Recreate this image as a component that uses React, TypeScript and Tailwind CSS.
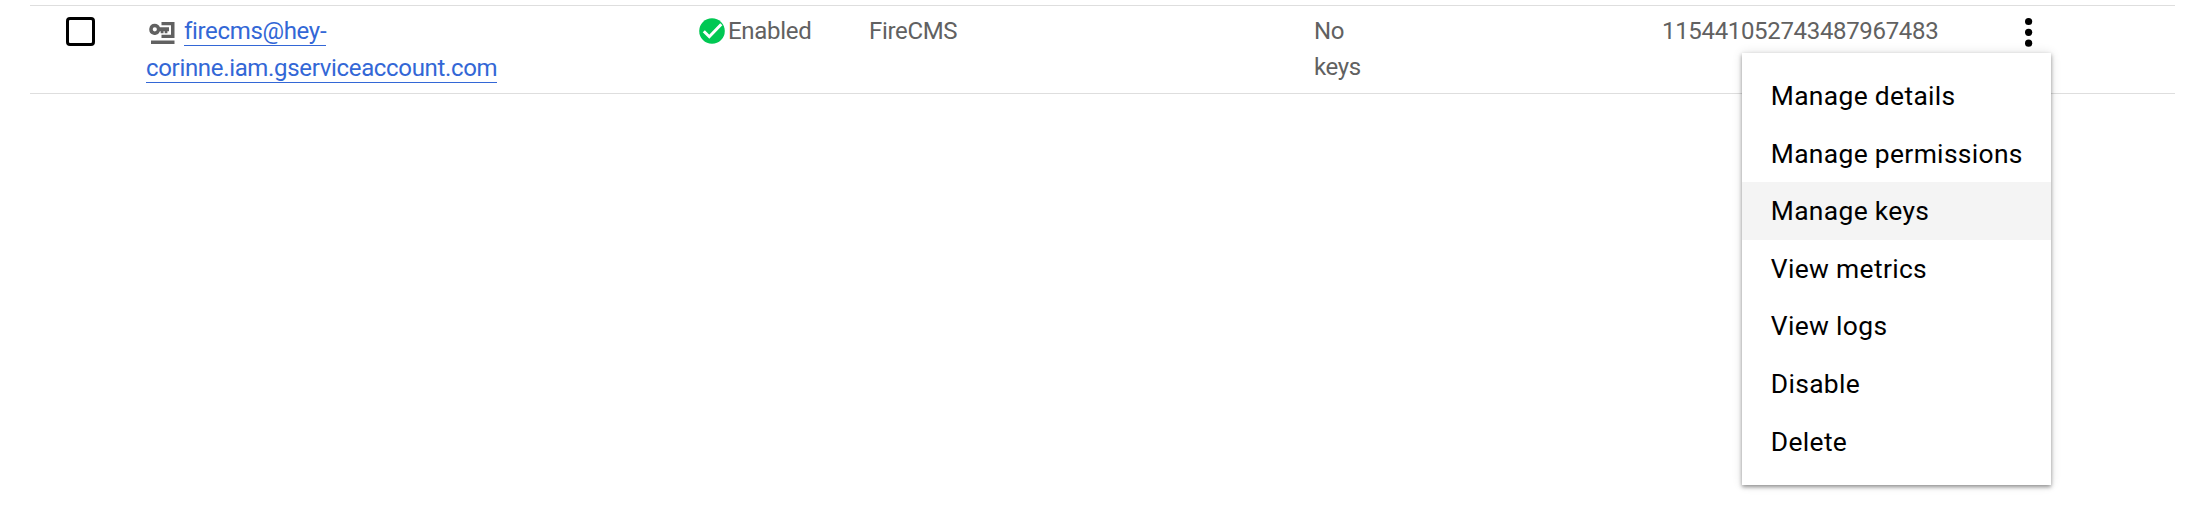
const menuItems = [
  'Manage details',
  'Manage permissions',
  'Manage keys',
  'View metrics',
  'View logs',
  'Disable',
  'Delete',
];

function ServiceAccountIcon() {
  return (
    <svg className="mr-[9px] ml-[3px] inline-block h-[22px] w-[26px] align-[-5px]" viewBox="0 0 26 22" fill="#616161">
      <path fillRule="evenodd" d="M5.8 1.8a5.5 5.5 0 0 1 5.1 3.5H20v4h-1.6v2h-2.7v-2h-1.2v2h-2.8V9.3h-.8A5.5 5.5 0 1 1 5.8 1.8Zm0 3.4a2.1 2.1 0 1 0 0 4.2 2.1 2.1 0 0 0 0-4.2Z" />
      <path d="M12.5 0H25.500V16H12.500V12.800H22V3.200H12.500Z" />
      <path d="M2 18.500H25.500V22H2Z" />
    </svg>
  );
}

function EnabledIcon() {
  return (
    <svg className="h-[26px] w-[26px] shrink-0" viewBox="0 0 26 26">
      <circle cx="13" cy="13" r="12.8" fill="#00c853" />
      <path d="M4.800 13.300L10.300 18.700L22.300 6.300" fill="none" stroke="#fff" strokeWidth="3" />
    </svg>
  );
}

function ActionsMenu() {
  return (
    <ul className="absolute top-[53px] left-[1742px] h-[432px] w-[309px] bg-white py-[14.2px] text-[26.4px] tracking-[0.34px] text-black shadow-[0_2px_4px_rgba(0,0,0,0.4),0_0_10px_rgba(0,0,0,0.12)]">
      {menuItems.map((item) => (
        <li
          key={item}
          className={
            item === 'Manage keys'
              ? 'flex h-[57.6px] items-center bg-[#f4f4f4] px-[28.8px] whitespace-nowrap'
              : 'flex h-[57.6px] items-center px-[28.8px] whitespace-nowrap'
          }
        >
          {item}
        </li>
      ))}
    </ul>
  );
}

export default function App() {
  return (
    <main className="relative h-[526px] w-[2194px] overflow-hidden bg-white pt-[5px] pl-[30px] font-['Roboto',sans-serif] text-[24px] leading-[36px] tracking-[-0.33px] text-[#616161]">
      <div className="grid h-[89px] w-[2145px] grid-cols-[116px_552px_171px_445px_348px_349px_164px] border-y border-[#dedede] pt-[7px]">
        <div className="pt-[4px] pl-[36px]">
          <div className="h-[29px] w-[29px] rounded-[4px] border-[3px] border-black" />
        </div>
        <div className="leading-[37px] whitespace-nowrap">
          <ServiceAccountIcon />
          <a className="border-b border-[#3367d6] text-[#3367d6]">firecms@hey-</a>
          <br />
          <a className="border-b border-[#3367d6] text-[#3367d6]">corinne.iam.gserviceaccount.com</a>
        </div>
        <div className="flex items-start gap-[3px] pt-[5px] pl-px">
          <EnabledIcon />
          <span className="-mt-[5px] tracking-[-0.3px]">Enabled</span>
        </div>
        <div>FireCMS</div>
        <div>
          No
          <br />
          keys
        </div>
        <div>115441052743487967483</div>
        <div className="pt-[4px] pl-[14px]">
          <svg className="h-[30px] w-[8px]" viewBox="0 0 8 30" fill="#000">
            <circle cx="3.600" cy="4.5" r="3.6" />
            <circle cx="3.600" cy="15.300" r="3.6" />
            <circle cx="3.600" cy="26.200" r="3.6" />
          </svg>
        </div>
      </div>
      <ActionsMenu />
    </main>
  );
}
